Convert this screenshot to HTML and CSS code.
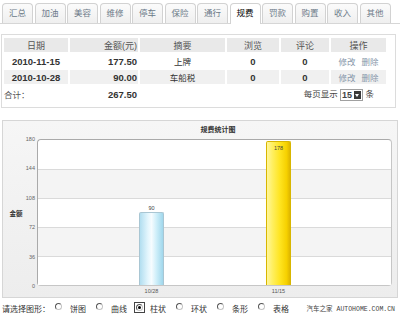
FILE: index.html
```html
<!DOCTYPE html>
<html lang="zh-CN">
<head>
	<meta charset="UTF-8">
	<title>规费统计</title>
	<link rel="stylesheet" href="styles.css">
</head>
<body>
	<div class="tabs">
		<a class="tab">汇总</a>
		<a class="tab">加油</a>
		<a class="tab">美容</a>
		<a class="tab">维修</a>
		<a class="tab">停车</a>
		<a class="tab">保险</a>
		<a class="tab">通行</a>
		<a class="tab active">规费</a>
		<a class="tab">罚款</a>
		<a class="tab">购置</a>
		<a class="tab">收入</a>
		<a class="tab">其他</a>
	</div>

	<div class="list">
		<table>
			<colgroup>
				<col style="width:64px"><col style="width:68px"><col style="width:85px">
				<col style="width:52px"><col style="width:48px"><col style="width:55px">
			</colgroup>
			<tr>
				<th>日期</th><th class="num">金额(元)</th><th>摘要</th><th>浏览</th><th>评论</th><th>操作</th>
			</tr>
			<tr>
				<td class="b">2010-11-15</td><td class="num b">177.50</td><td>上牌</td>
				<td class="b">0</td><td class="b">0</td>
				<td class="ops"><a href="#">修改</a><a href="#">删除</a></td>
			</tr>
			<tr class="alt">
				<td class="b">2010-10-28</td><td class="num b">90.00</td><td>车船税</td>
				<td class="b">0</td><td class="b">0</td>
				<td class="ops"><a href="#">修改</a><a href="#">删除</a></td>
			</tr>
			<tr class="total">
				<td class="left">合计：</td><td class="num b">267.50</td><td></td>
				<td colspan="3" class="pager">每页显示 <span class="select"><b>15</b><i></i></span> 条</td>
			</tr>
		</table>
	</div>

	<div class="chart">
		<div class="chart-title">规费统计图</div>
		<div class="chart-body">
			<div class="yaxis">
				<div class="ytitle">金额</div>
				<div class="ticks">
					<span>180</span><span>144</span><span>108</span><span>72</span><span>36</span><span>0</span>
				</div>
			</div>
			<div class="plot">
				<div class="band"></div>
				<div class="band odd"></div>
				<div class="band"></div>
				<div class="band odd"></div>
				<div class="band"></div>
				<!-- 柱子高度 = 值 / 180 * 145 -->
				<div class="bar blue" style="left:101px;height:72px">
					<span class="val">90</span><span class="cat">10/28</span>
				</div>
				<div class="bar yellow" style="left:228px;height:143px">
					<span class="val in">178</span><span class="cat">11/15</span>
				</div>
			</div>
		</div>
	</div>

	<div class="types">
		<span>请选择图形：</span>
		<span class="radio first"></span><span>饼图</span>
		<span class="radio"></span><span>曲线</span>
		<span class="focus"><span class="radio on"></span></span><span>柱状</span>
		<span class="radio"></span><span>环状</span>
		<span class="radio"></span><span>条形</span>
		<span class="radio"></span><span>表格</span>
		<span class="mark">汽车之家 AUTOHOME.COM.CN</span>
	</div>
</body>
</html>
```

FILE: styles.css
```css
*{margin:0;padding:0;}
body{width:400px;font-family:"Liberation Sans","Noto Sans CJK SC",sans-serif;font-size:8.5px;color:#333;background:#fff;}
a{text-decoration:none;}

/* 标签 */
.tabs{display:grid;grid-template-columns:repeat(12,31px);grid-template-rows:20px;column-gap:1.5px;padding:3px 0 0 2px;border-bottom:1px solid #d6d6d6;}
.tab{box-sizing:border-box;height:20px;border:1px solid #d2d2d2;border-bottom:0;border-radius:4px 4px 0 0;background:linear-gradient(#fbfbfb,#efefef);color:#6c7a88;text-align:center;line-height:19px;}
.tab.active{height:21px;background:#fff;color:#000;position:relative;z-index:1;}

/* 列表 */
.list{width:393px;margin:10px 0 0 1px;padding:1px 0 3px;border:1px solid #dcdcdc;}
table{border-collapse:separate;border-spacing:2px;table-layout:fixed;width:386px;}
th,td{height:14px;padding:0 2px;text-align:center;white-space:nowrap;}
th{background:#e9e9e9;font-weight:normal;color:#555;font-size:9px;}
.alt td{background:#f0f0f0;}
.num{text-align:right;padding-right:1px;}
.b{font-weight:bold;font-size:9.5px;color:#333;}
.total td{height:16px;}
.left{text-align:left;padding-left:0;color:#555;}
.ops a{color:#8797aa;margin:0 3px;}
.pager{text-align:right;padding-right:12px;color:#444;}
.select{display:inline-block;vertical-align:middle;height:10px;border:1px solid #a0a0a0;line-height:10px;font-size:9px;padding-left:1px;}
.select b{display:inline-block;vertical-align:top;}
.select i{display:inline-block;vertical-align:top;width:7px;height:8px;margin:1px 1px 0 2px;background:#3a3a3a;position:relative;}
.select i:after{content:"";position:absolute;left:1px;top:3px;border-left:2.5px solid transparent;border-right:2.5px solid transparent;border-top:3px solid #fff;}

/* 图表 */
.chart{width:394px;height:176px;margin:12px 0 0 2px;border:1px solid #d6d6d6;background:linear-gradient(#f6f6f6,#ededed);}
.chart-title{height:18px;line-height:18px;text-align:center;font-size:7px;font-weight:bold;color:#333;padding-left:36px;}
.chart-body{display:flex;}
.yaxis{display:flex;width:34px;height:147px;}
.ytitle{width:22px;padding-left:4px;box-sizing:border-box;display:flex;align-items:center;justify-content:center;font-size:6.5px;font-weight:bold;color:#333;}
.ticks{flex:1;display:flex;flex-direction:column;justify-content:space-between;}
.ticks span{height:0;line-height:0;text-align:right;padding-right:2px;font-size:5.5px;color:#666;}
.plot{position:relative;width:353px;border:1px solid #c6c6c6;border-top-color:#aaa;border-left-color:#aaa;border-radius:4px;overflow:visible;display:flex;flex-direction:column;}
.band{height:29px;background:#fff;}
.band:first-child{border-radius:4px 4px 0 0;}
.band:last-of-type{border-radius:0 0 4px 4px;}
.band.odd{background:#f4f4f4;}
.band+.band{border-top:1px solid #dadada;height:28px;}
.bar{position:absolute;bottom:0;width:23px;border:1px solid #a9c6d3;border-bottom:0;border-radius:2px 2px 0 0;}
.bar.blue{background:linear-gradient(90deg,#b2def0 0%,#e4f6fd 35%,#f6fcff 50%,#cdeef9 72%,#a0d7ec 100%);}
.bar.yellow{border-color:#d8b600;background:linear-gradient(90deg,#fff69c 0%,#fff064 22%,#ffe522 55%,#f6d100 85%,#deb600 100%);}
.val{position:absolute;left:0;right:0;bottom:100%;margin-bottom:2px;text-align:center;font-size:5.5px;color:#444;line-height:6px;}
.val.in{bottom:auto;top:3px;margin:0;}
.cat{position:absolute;left:-10px;right:-10px;top:100%;margin-top:3px;text-align:center;font-size:5.5px;color:#555;line-height:6px;}

/* 图形选择 */
.types{display:flex;align-items:center;height:18px;padding:1px 0 0 2px;color:#333;font-size:8px;}
.radio{display:inline-block;box-sizing:border-box;width:7px;height:7px;border-radius:50%;border:1px solid #c4c4c4;border-top-color:#555;border-left-color:#555;background:#fff;margin:0 8px 0 10px;position:relative;top:-2px;}
.radio.first{margin-left:5px;}
.focus{display:inline-flex;align-items:center;justify-content:center;box-sizing:border-box;width:11px;height:11px;border:1px solid #444;margin:0 5px 0 7px;position:relative;top:-1px;}
.focus .radio{margin:0;top:0;}
.radio.on:after{content:"";position:absolute;left:1px;top:1px;width:3px;height:3px;border-radius:50%;background:#000;}
.mark{margin-left:auto;padding-right:5px;font-family:"Liberation Mono","Noto Sans CJK SC",monospace;font-size:6.5px;color:#444;}
```
